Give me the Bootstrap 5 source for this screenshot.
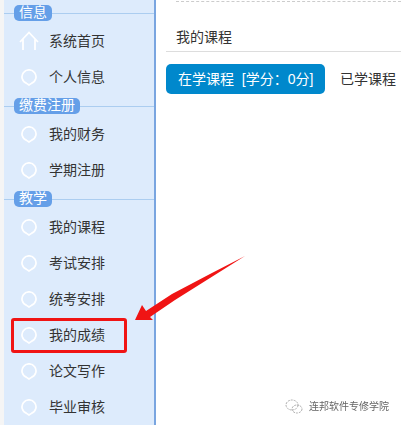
<!DOCTYPE html>
<html lang="zh">
<head>
  <meta charset="UTF-8">
  <title>我的课程</title>
  <meta name="viewport" content="width=device-width, initial-scale=1" />
  <link href="https://cdn.jsdelivr.net/npm/bootstrap@5.3.0/dist/css/bootstrap.min.css" rel="stylesheet" />
  <style>
    html, body { height: 425px; overflow: hidden; }
    body { font-family: "Liberation Sans", "Noto Sans CJK SC", sans-serif; font-size: 14px; color: #333; background: #fff; position: relative; }
    .page-wrap { height: 425px; background: #fff; }
    .side-strip { width: 4px; flex: none; background: #f5f5f5; }
    .side-menu { width: 152px; flex: none; background: #ddebfc; border-right: 2px solid #79a5e0; padding-top: 2px; }
    .menu-head { height: 21px; position: relative; padding-left: 10px; padding-top: 3px; }
    .menu-head::before { content: ""; position: absolute; left: 0; right: 0; top: 11px; height: 1px; background: #abcdf0; }
    .menu-tag { position: relative; display: block; width: fit-content; height: 16px; line-height: 14px; padding: 0 5px; font-size: 14px; color: #fff; background: #659fe8; border-radius: 5px; }
    .menu-item { height: 36px; padding-left: 17px; gap: 12px; color: #333; }
    .menu-ring { width: 16px; height: 17px; flex: none; }
    .main-pane { padding-left: 10px; min-width: 0; }
    .dash-line { margin: 1px 0 0 10px; border-top: 1px dashed #ccc; }
    .pane-title { margin-top: 25px; height: 24px; padding-left: 10px; border-bottom: 1px solid #ddd; line-height: 20px; box-sizing: content-box; }
    .tab-row { margin-top: 12px; gap: 15px; }
    .tab-on { width: 159px; height: 30px; padding: 0 0 0 12px; border: 0; border-radius: 5px; background: #0088cc; color: #fff; font-size: 14px; text-align: left; white-space: pre; line-height: 30px; }
    .tab-off { color: #333; line-height: 30px; }
    .red-box { position: absolute; left: 11px; top: 318px; width: 116px; height: 35px; border: 3px solid #f01414; border-radius: 3px; }
    .red-arrow { position: absolute; left: 130px; top: 250px; }
    .mark-line { position: absolute; left: 285px; top: 399px; gap: 6px; color: #666; font-size: 10px; line-height: 16px; filter: blur(.4px); }
  </style>
</head>
<body>

<div class="d-flex page-wrap">
  <div class="side-strip"></div>
  <div class="side-menu" id="sideMenu"></div>

  <div class="main-pane flex-grow-1">
    <div class="dash-line"></div>
    <div class="pane-title">我的课程</div>
    <div class="d-flex tab-row">
      <button class="btn tab-on" type="button">在学课程  [学分：0分]</button>
      <div class="tab-off">已学课程</div>
    </div>
  </div>
</div>

<!-- annotations on top of the screenshot -->
<div class="red-box"></div>
<svg class="red-arrow" width="120" height="80" viewBox="0 0 120 80">
  <polygon points="115,6 80,28 45,50 20,67 23,70 5,70 12,55 16,61 42,44 80,24" fill="#f01414" />
</svg>
<div class="d-flex align-items-center mark-line">
  <svg width="18" height="16" viewBox="0 0 18 16" fill="none" stroke="#aaa" stroke-width="1" stroke-dasharray="2 1">
    <ellipse cx="7" cy="6" rx="6" ry="5" />
    <ellipse cx="12" cy="10" rx="5" ry="4" />
  </svg>
  <span>连邦软件专修学院</span>
</div>

<script>
  const ring = `<svg class="menu-ring" viewBox="0 0 16 17" fill="none" stroke="#fff" stroke-width="1.7"><path d="M8 16 L5.6 14.4 A7 7 0 1 1 10.4 14.4 Z"/></svg>`;
  const house = `<svg class="menu-ring" viewBox="0 0 16 17" style="overflow:visible" fill="none" stroke="#fff" stroke-width="1.8"><path d="M-1 9 L8 -0.5 L17 9 M2 6.5 V17 M14 6.5 V17"/></svg>`;

  const menu = [
    { title: "信息", items: ["系统首页", "个人信息"] },
    { title: "缴费注册", items: ["我的财务", "学期注册"] },
    { title: "教学", items: ["我的课程", "考试安排", "统考安排", "我的成绩", "论文写作", "毕业审核"] }
  ];

  document.getElementById("sideMenu").innerHTML = menu.map(group => `
    <div class="menu-head"><span class="menu-tag">${group.title}</span></div>
    ${group.items.map(name => `
      <div class="d-flex align-items-center menu-item">${name === "系统首页" ? house : ring}<span>${name}</span></div>
    `).join("")}
  `).join("");
</script>

<script src="https://cdn.jsdelivr.net/npm/bootstrap@5.3.0/dist/js/bootstrap.bundle.min.js"></script>
</body>
</html>
